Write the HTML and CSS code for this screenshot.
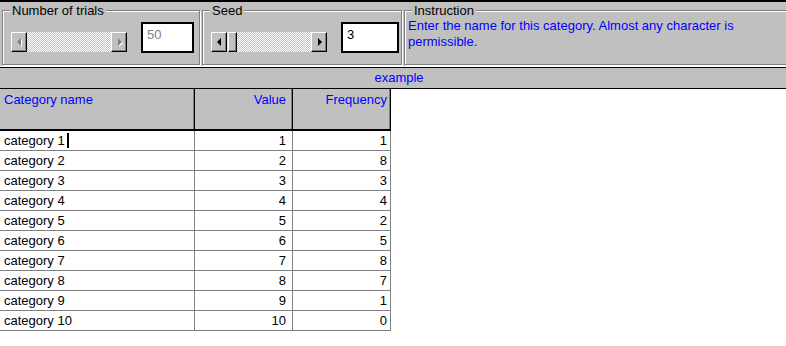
FILE: index.html
```html
<!DOCTYPE html>
<html lang="en">

<head>
    <meta charset="UTF-8">
    <title>Categories</title>
    <link rel="stylesheet" href="styles.css">
</head>

<body>
    <div class="toolbar">
        <fieldset class="group group-trials">
            <legend>Number of trials</legend>
            <div class="group-row">
                <div class="scrollbar disabled">
                    <span class="sb-btn"><i class="arrow arrow-left"></i></span>
                    <span class="sb-track"></span>
                    <span class="sb-btn"><i class="arrow arrow-right"></i></span>
                </div>
                <div class="field field-disabled">50</div>
            </div>
        </fieldset>
        <fieldset class="group group-seed">
            <legend>Seed</legend>
            <div class="group-row">
                <div class="scrollbar">
                    <span class="sb-btn"><i class="arrow arrow-left"></i></span>
                    <span class="sb-track"><span class="sb-thumb"></span></span>
                    <span class="sb-btn"><i class="arrow arrow-right"></i></span>
                </div>
                <div class="field">3</div>
            </div>
        </fieldset>
        <fieldset class="group group-info">
            <legend>Instruction</legend>
            <p class="instruction">Enter the name for this category. Almost any character is permissible.</p>
        </fieldset>
    </div>

    <div class="caption">example</div>

    <div class="grid">
        <div class="head">Category name</div>
        <div class="head num">Value</div>
        <div class="head num last">Frequency</div>

        <div class="cell">category 1<span class="caret"></span></div>
        <div class="cell num">1</div>
        <div class="cell num last">1</div>

        <div class="cell">category 2</div>
        <div class="cell num">2</div>
        <div class="cell num last">8</div>

        <div class="cell">category 3</div>
        <div class="cell num">3</div>
        <div class="cell num last">3</div>

        <div class="cell">category 4</div>
        <div class="cell num">4</div>
        <div class="cell num last">4</div>

        <div class="cell">category 5</div>
        <div class="cell num">5</div>
        <div class="cell num last">2</div>

        <div class="cell">category 6</div>
        <div class="cell num">6</div>
        <div class="cell num last">5</div>

        <div class="cell">category 7</div>
        <div class="cell num">7</div>
        <div class="cell num last">8</div>

        <div class="cell">category 8</div>
        <div class="cell num">8</div>
        <div class="cell num last">7</div>

        <div class="cell">category 9</div>
        <div class="cell num">9</div>
        <div class="cell num last">1</div>

        <div class="cell">category 10</div>
        <div class="cell num">10</div>
        <div class="cell num last">0</div>
    </div>
</body>

</html>
```

FILE: styles.css
```css
body {
    margin: 0;
    background-color: #fff;
    font-family: 'Liberation Sans', Arial, sans-serif;
    font-size: 13px;
    color: #000;
    overflow: hidden;
}

/* top panel with the three group boxes */
.toolbar {
    display: flex;
    gap: 2px;
    height: 68px;
    box-sizing: border-box;
    padding: 1px 0 0 2px;
    background-color: #c0c0c0;
    border-top: 2px solid #000;
    border-bottom: 1px solid #000;
    box-shadow: inset 0 -1px 0 #fff;
}

.group {
    margin: 0;
    padding: 0 0 0 7px;
    min-width: 0;
    height: 62px;
    box-sizing: border-box;
    border: 1px solid #808080;
    box-shadow: inset 1px 1px 0 #fff, 1px 1px 0 #fff;
}

.group legend {
    padding: 0 2px;
    line-height: 15px;
    background-color: #c0c0c0;
}

.group-trials {
    width: 198px;
}

.group-seed {
    width: 200px;
}

.group-info {
    flex: 1;
    margin-right: -4px;
    padding-left: 3px;
}

.group-info legend {
    margin-left: 4px;
}

.group-row {
    display: flex;
    align-items: flex-start;
    padding-left: 1px;
}

/* scroll bars */
.scrollbar {
    display: flex;
    flex-shrink: 0;
    width: 116px;
    height: 20px;
    margin-top: 14px;
}

.sb-btn,
.sb-thumb {
    display: flex;
    align-items: center;
    justify-content: center;
    width: 16px;
    box-sizing: border-box;
    background-color: #c0c0c0;
    border-top: 1px solid #fff;
    border-left: 1px solid #fff;
    border-right: 1px solid #000;
    border-bottom: 1px solid #000;
    box-shadow: inset -1px -1px 0 #808080;
}

.sb-track {
    flex: 1;
    display: flex;
    background: repeating-conic-gradient(#fff 0 25%, #c0c0c0 0 50%) 0 0 / 2px 2px;
}

.sb-thumb {
    width: 9px;
    margin-left: 1px;
}

.arrow {
    width: 0;
    height: 0;
    border-top: 4px solid transparent;
    border-bottom: 4px solid transparent;
}

.arrow-left {
    border-right: 4px solid #000;
    margin-right: 1px;
}

.arrow-right {
    border-left: 4px solid #000;
    margin-left: 1px;
}

.disabled .arrow-left {
    border-right-color: #808080;
    filter: drop-shadow(1px 1px 0 #fff);
}

.disabled .arrow-right {
    border-left-color: #808080;
    filter: drop-shadow(1px 1px 0 #fff);
}

/* number boxes */
.field {
    flex-shrink: 0;
    width: 58px;
    height: 31px;
    box-sizing: border-box;
    margin: 4px 0 0 14px;
    padding: 3px 4px;
    background-color: #fff;
    border: 2px solid #000;
    line-height: 16px;
}

.field-disabled {
    width: 53px;
    color: #808080;
}

.instruction {
    margin: 0;
    max-width: 370px;
    line-height: 16px;
    color: #00f;
}

/* caption strip */
.caption {
    height: 20px;
    line-height: 20px;
    padding-left: 12px;
    text-align: center;
    color: #00f;
    background-color: #c0c0c0;
    border-bottom: 1px solid #000;
}

/* category table */
.grid {
    display: grid;
    grid-template-columns: 195px 98px 98px;
    width: 391px;
}

.head,
.cell {
    box-sizing: border-box;
    padding: 0 4px;
    white-space: nowrap;
}

.head {
    height: 42px;
    padding-top: 3px;
    line-height: 15px;
    color: #00f;
    background-color: #c0c0c0;
    border-right: 1px solid #000;
    border-bottom: 2px solid #000;
    box-shadow: inset -1px 0 0 #808080;
}

.cell {
    height: 20px;
    line-height: 19px;
    border-right: 1px solid #808080;
    border-bottom: 1px solid #808080;
}

.num {
    text-align: right;
    padding-right: 6px;
}

.num.last {
    padding-right: 3px;
}

.caret {
    display: inline-block;
    width: 2px;
    height: 15px;
    margin-left: 2px;
    vertical-align: -3px;
    background-color: #000;
}
```
